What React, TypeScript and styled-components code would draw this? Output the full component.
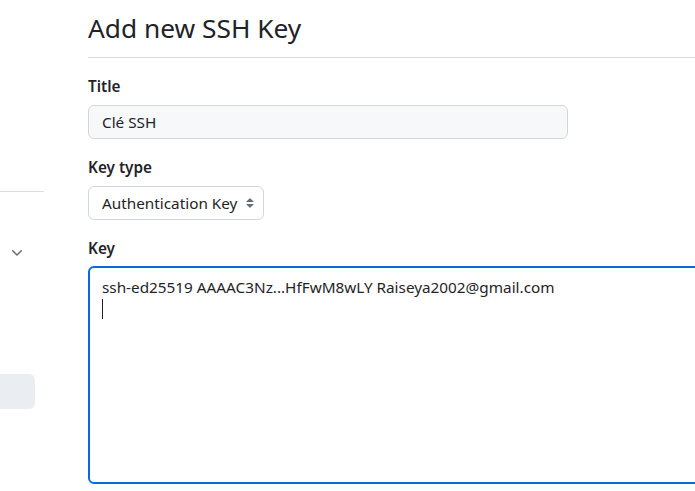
import React from "react";
import styled, { createGlobalStyle } from "styled-components";

const Global = createGlobalStyle`
  html, body {
    margin: 0;
    padding: 0;
    overflow: hidden;
    background: #ffffff;
  }
  body {
    font-family: "Noto Sans", "Open Sans", sans-serif;
    color: #1f2328;
  }
`;

const Page = styled.div`
  display: flex;
  width: 695px;
  height: 491px;
  gap: 44px;
  overflow: hidden;
`;

const Sidebar = styled.aside`
  width: 44px;
  flex: 0 0 44px;
  display: flex;
  flex-direction: column;
  padding-top: 191px;
  box-sizing: border-box;
`;

const Divider = styled.div`
  height: 1px;
  background: #d8dee4;
`;

const NavRow = styled.div`
  display: flex;
  align-items: center;
  height: 16px;
  margin-top: 53px;
  padding-left: 9px;
  color: #656d76;
`;

const NavItem = styled.div`
  width: 45px;
  height: 35px;
  margin-left: -10px;
  margin-top: 113px;
  border-radius: 6px;
  background: #eaeef2;
`;

const Main = styled.main`
  flex: 1;
  min-width: 0;
  display: flex;
  flex-direction: column;
  padding-top: 10px;
`;

const Heading = styled.h1`
  margin: 0;
  font-size: 26.3px;
  line-height: 36px;
  font-weight: 400;
  padding-bottom: 11px;
  border-bottom: 1px solid #d8dee4;
  white-space: nowrap;
`;

const Group = styled.div`
  display: flex;
  flex-direction: column;
  align-items: flex-start;
  gap: 8px;
  margin-top: 18px;
`;

const Label = styled.label`
  font-size: 15.3px;
  line-height: 21px;
  font-weight: 600;
`;

const TextInput = styled.div`
  box-sizing: border-box;
  width: 480px;
  height: 34px;
  padding: 0 13px;
  display: flex;
  align-items: center;
  font-size: 15.3px;
  background: #f6f8fa;
  border: 1px solid #d0d7de;
  border-radius: 6px;
`;

const Select = styled.div`
  box-sizing: border-box;
  height: 34px;
  width: 176px;
  padding: 0 5px 0 13px;
  display: flex;
  align-items: center;
  justify-content: space-between;
  font-size: 15.3px;
  white-space: nowrap;
  background: #ffffff;
  border: 1px solid #d0d7de;
  border-radius: 6px;
`;

const Textarea = styled.div`
  box-sizing: border-box;
  width: 640px;
  flex: 0 0 218px;
  height: 218px;
  margin-top: -1px;
  padding: 9px 12px;
  font-size: 15.3px;
  line-height: 21px;
  white-space: nowrap;
  background: #ffffff;
  border: 2px solid #0969da;
  border-radius: 6px;
`;

const Caret = styled.span`
  display: inline-block;
  width: 1px;
  height: 20px;
  margin-top: 1px;
  background: #1f2328;
`;

const ChevronDown = () => (
  <svg width="16" height="16" viewBox="0 0 16 16" fill="currentColor">
    <path d="M12.78 5.22a.749.749 0 0 1 0 1.06l-4.25 4.25a.749.749 0 0 1-1.06 0L3.22 6.28a.749.749 0 1 1 1.06-1.06L8 8.94l3.72-3.72a.749.749 0 0 1 1.06 0Z" />
  </svg>
);

const UpDown = () => (
  <svg width="16" height="16" viewBox="0 0 16 16" fill="#656d76">
    <path d="M4.427 9.427l3.396 3.396a.25.25 0 00.354 0l3.396-3.396A.25.25 0 0011.396 9H4.604a.25.25 0 00-.177.427zM4.427 6.573l3.396-3.396a.25.25 0 01.354 0l3.396 3.396A.25.25 0 0111.396 7H4.604a.25.25 0 01-.177-.427z" />
  </svg>
);

export default function App() {
  return (
    <>
      <Global />
      <Page>
        <Sidebar>
          <Divider />
          <NavRow>
            <ChevronDown />
          </NavRow>
          <NavItem />
        </Sidebar>
        <Main>
          <Heading>Add new SSH Key</Heading>
          <Group>
            <Label>Title</Label>
            <TextInput>Clé SSH</TextInput>
          </Group>
          <Group>
            <Label>Key type</Label>
            <Select>
              <span>Authentication Key</span>
              <UpDown />
            </Select>
          </Group>
          <Group>
            <Label>Key</Label>
            <Textarea>
              ssh-ed25519 AAAAC3Nz...HfFwM8wLY Raiseya2002@gmail.com
              <br />
              <Caret />
            </Textarea>
          </Group>
        </Main>
      </Page>
    </>
  );
}
